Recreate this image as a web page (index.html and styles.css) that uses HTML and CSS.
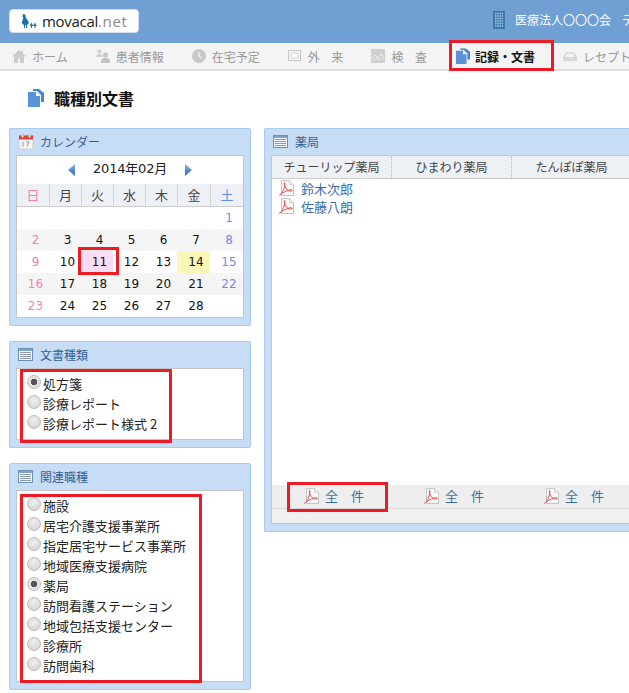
FILE: index.html
```html
<!DOCTYPE html>
<html lang="ja">
<head>
<meta charset="utf-8">
<title>職種別文書</title>
<link rel="stylesheet" href="styles.css">
</head>
<body>
<svg class="defs" width="0" height="0" aria-hidden="true">
  <defs>
    <linearGradient id="arrowFill" x1="0" y1="0" x2="0" y2="1">
      <stop offset="0" stop-color="#8db4e6"/>
      <stop offset="1" stop-color="#2f66b8"/>
    </linearGradient>
  </defs>
  <symbol id="pdf" viewBox="0 0 16 16">
    <path d="M2.500.5h8l4 4v11h-12z" fill="#fbfbfb" stroke="#c4c4c4"/>
    <path d="M10.500.5v4h4" fill="#eee" stroke="#d2d2d2"/>
    <path d="M.6 15.200C3 14 5.500 9 6 3.500c.3-1.500-.9-1.500-.9 0 .3 3 3 7 5.400 7.600 2 .3 3.200-.4 2.700-1-.6-.8-5-.4-12.600 4.900z" fill="none" stroke="#e2524b" stroke-width="1"/>
  </symbol>
  <symbol id="list" viewBox="0 0 15 13">
    <rect x=".5" y=".5" width="14" height="12" fill="#f4f7fb" stroke="#6d8fb5"/>
    <rect x="1" y="1" width="13" height="2" fill="#7fa3cc"/>
    <path d="M2 4.500h11M2 6.500h11M2 8.500h11M2 10.500h11" stroke="#8e9baa"/>
  </symbol>
  <symbol id="doc" viewBox="0 0 16 18">
    <path d="M5 0h6l5 4v9h-3V6L9 2H5z" fill="#4a86cf"/>
    <path d="M0 3h8l4 4v11H0z" fill="#5b92d8"/>
    <path d="M8 3v4h4z" fill="#fff"/>
  </symbol>
</svg>

<div class="page">
  <header class="top">
    <div class="logo">
      <svg class="duck" viewBox="0 0 16 14" width="16" height="14">
        <path d="M2.500 0C4 0 4.700 1 4.600 2.200 4.500 4 6.500 5.500 7.500 7.500c.8 2-.8 3.700-3 3.700-2.500 0-4-1.700-3.500-3.700C1.500 5.500 2.800 4.500 2.200 3H0.500L2 2.200C1.500 1.500 1.700.3 2.500 0z" fill="#1673ad"/>
        <path d="M3.500 11v3M5.500 11v3M10.500 11v3M14 11v3" stroke="#1673ad"/>
        <path d="M10.500 8.500l1.800 3.500H8.700zM14 8.500l1.800 3.500h-3.600z" fill="#1673ad"/>
      </svg>
      <span class="logo-main">movacal</span><span class="logo-sub">.net</span>
    </div>
    <div class="org">
      <svg class="building" viewBox="0 0 12 18" width="12" height="18">
        <rect width="12" height="18" fill="#3a78ac"/>
        <path d="M2 2.500h8M2 5h8M2 7.500h8M2 10h8M2 12.500h8M2 15h8" stroke="#a9c8e6" stroke-width="1.500" stroke-dasharray="1.500 .75"/>
      </svg>
      <span class="org-name">医療法人〇〇〇会</span>
      <span class="org-more">テ</span>
    </div>
  </header>

  <nav class="nav">
    <a class="nav-item"><svg class="nav-icon" viewBox="0 0 14 14"><path d="M7 1L0 7.500h2V14h4V9.500h2V14h4V7.500h2L11 4.500V1.500H9.500v1.600z" fill="#ccc"/></svg>ホーム</a>
    <a class="nav-item"><svg class="nav-icon" viewBox="0 0 14 14"><circle cx="3.500" cy="2.500" r="2.200" fill="#d2d2d2"/><path d="M0 8c0-2 1.500-3 3.500-3S7 6 7 8z" fill="#d2d2d2"/><circle cx="9.500" cy="6" r="2.500" fill="#c4c4c4"/><path d="M5 14v-2c0-2 2-3.200 4.500-3.200S14 10 14 12v2z" fill="#c4c4c4"/></svg>患者情報</a>
    <a class="nav-item"><svg class="nav-icon" viewBox="0 0 14 14"><circle cx="7" cy="7" r="7" fill="#c8c8c8"/><path d="M7 3v4.500l3 1.500" fill="none" stroke="#f4f4f4" stroke-width="1.200"/></svg>在宅予定</a>
    <a class="nav-item"><svg class="nav-icon" viewBox="0 0 14 14"><rect x=".5" y="1.500" width="12" height="10" fill="#f6f6f6" stroke="#c8c8c8"/><rect x="3" y="4" width="7" height="5" fill="#fff" stroke="#d0d0d0"/></svg><span class="wide">外 来</span></a>
    <a class="nav-item"><svg class="nav-icon" viewBox="0 0 14 14"><rect width="14" height="14" fill="#cfcfcf"/><path d="M1 9l3-3 3 3 3-4 3 3M1 12l4-3 3 2 5-3" fill="none" stroke="#eee"/></svg><span class="wide">検 査</span></a>
    <a class="nav-item is-active"><svg class="nav-icon" viewBox="0 0 16 18"><use href="#doc"/></svg>記録・文書</a>
    <a class="nav-item"><svg class="nav-icon" viewBox="0 0 14 14"><path d="M0 8l3-5h8l3 5v4H0z" fill="#d8d8d8"/><path d="M2 8l2-3.500h6L12 8z" fill="#f4f4f4"/></svg>レセプト</a>
  </nav>

  <h1 class="title"><svg class="title-icon" viewBox="0 0 16 18"><use href="#doc"/></svg>職種別文書</h1>

  <main class="columns">
    <div class="side">
      <section class="panel">
        <h2 class="panel-head">
          <svg class="cal-icon" viewBox="0 0 15 15"><rect y="2" width="14" height="13" fill="#f5f5f5" stroke="#aaa" stroke-width=".5"/><rect y="1.500" width="14" height="4" fill="#d9423a"/><rect x="2.500" width="2" height="3.500" fill="#eee" stroke="#888" stroke-width=".4"/><rect x="9.500" width="2" height="3.500" fill="#eee" stroke="#888" stroke-width=".4"/><path d="M4 8v4.500M7 8h3l-2 4.500" fill="none" stroke="#999"/></svg>
          カレンダー
        </h2>
        <div class="panel-body">
          <div class="month">
            <svg class="arrow" viewBox="0 0 7 12"><path d="M7 0v12L0 6z" fill="url(#arrowFill)"/></svg>
            <span class="month-label">2014年02月</span>
            <svg class="arrow" viewBox="0 0 7 12"><path d="M0 0v12l7-6z" fill="url(#arrowFill)"/></svg>
          </div>
          <div class="cal-head">
            <span class="sun">日</span><span>月</span><span>火</span><span>水</span><span>木</span><span>金</span><span class="sat">土</span>
          </div>
          <div class="cal-row"><span></span><span></span><span></span><span></span><span></span><span></span><span class="sat">1</span></div>
          <div class="cal-row is-alt"><span class="sun">2</span><span>3</span><span>4</span><span>5</span><span>6</span><span>7</span><span class="sat">8</span></div>
          <div class="cal-row"><span class="sun">9</span><span>10</span><span class="picked">11</span><span>12</span><span>13</span><span class="today">14</span><span class="sat">15</span></div>
          <div class="cal-row is-alt"><span class="sun">16</span><span>17</span><span>18</span><span>19</span><span>20</span><span>21</span><span class="sat">22</span></div>
          <div class="cal-row"><span class="sun">23</span><span>24</span><span>25</span><span>26</span><span>27</span><span>28</span><span></span></div>
        </div>
      </section>

      <section class="panel">
        <h2 class="panel-head"><svg class="list-icon"><use href="#list"/></svg>文書種類</h2>
        <div class="panel-body radios">
          <div class="radio is-on">処方箋</div>
          <div class="radio">診療レポート</div>
          <div class="radio">診療レポート様式 2</div>
        </div>
      </section>

      <section class="panel">
        <h2 class="panel-head"><svg class="list-icon"><use href="#list"/></svg>関連職種</h2>
        <div class="panel-body radios">
          <div class="radio">施設</div>
          <div class="radio">居宅介護支援事業所</div>
          <div class="radio">指定居宅サービス事業所</div>
          <div class="radio">地域医療支援病院</div>
          <div class="radio is-on">薬局</div>
          <div class="radio">訪問看護ステーション</div>
          <div class="radio">地域包括支援センター</div>
          <div class="radio">診療所</div>
          <div class="radio">訪問歯科</div>
        </div>
      </section>
    </div>

    <section class="panel panel-main">
      <h2 class="panel-head"><svg class="list-icon"><use href="#list"/></svg>薬局</h2>
      <div class="panel-body">
        <div class="tbl-head"><span>チューリップ薬局</span><span>ひまわり薬局</span><span>たんぽぽ薬局</span></div>
        <div class="tbl-body">
          <a class="file"><svg class="pdf-icon"><use href="#pdf"/></svg>鈴木次郎</a>
          <a class="file"><svg class="pdf-icon"><use href="#pdf"/></svg>佐藤八朗</a>
        </div>
        <div class="tbl-foot">
          <a><svg class="pdf-icon"><use href="#pdf"/></svg><span class="all">全　件</span></a>
          <a><svg class="pdf-icon"><use href="#pdf"/></svg><span class="all">全　件</span></a>
          <a><svg class="pdf-icon"><use href="#pdf"/></svg><span class="all">全　件</span></a>
        </div>
        <div class="tbl-end"></div>
      </div>
    </section>
  </main>

  <div class="mark mark-nav"></div>
  <div class="mark mark-day"></div>
  <div class="mark mark-doc"></div>
  <div class="mark mark-job"></div>
  <div class="mark mark-all"></div>
</div>
</body>
</html>
```

FILE: styles.css
```css
* { box-sizing: border-box; }
html, body { margin: 0; padding: 0; }
body {
  font-family: "DejaVu Sans", "Noto Sans CJK JP", sans-serif;
  font-size: 12px;
  color: #222;
  background: #fff;
}
.defs { position: absolute; }
.page { position: relative; width: 629px; height: 693px; overflow: hidden; }

.top {
  height: 43px;
  background: #6f9fd3;
  display: flex;
  justify-content: space-between;
  align-items: center;
  padding-left: 9px;
  white-space: nowrap;
}
.logo {
  width: 130px;
  height: 24px;
  margin-bottom: 1px;
  background: #fff;
  border: 1px solid #cfdff0;
  border-radius: 4px;
  display: flex;
  align-items: center;
  padding-left: 11px;
  font-family: "Open Sans", sans-serif;
  font-size: 15px;
}
.duck { margin-right: 5px; flex: none; }
.logo-main { color: #222; letter-spacing: -.3px; }
.logo-sub { color: #8a8a8a; letter-spacing: .7px; }
.org {
  width: 136px;
  flex: none;
  display: flex;
  align-items: center;
  margin-bottom: 4px;
  color: #fff;
  font-family: "Noto Sans CJK JP", sans-serif;
  font-size: 12px;
  overflow: hidden;
}
.building { margin-right: 10px; flex: none; }
.org-more { margin-left: 11px; }

.nav {
  height: 28px;
  background: #f4f4f4;
  border-bottom: 2px solid #ddd;
  display: flex;
  gap: 28px;
  padding-left: 12px;
  align-items: center;
  white-space: nowrap;
  font-family: "Noto Sans CJK JP", sans-serif;
  font-size: 12px;
  color: #999;
}
.nav-item { display: flex; align-items: center; flex: none; }
.nav-icon { width: 14px; height: 14px; margin-right: 6px; flex: none; }
.wide { word-spacing: 9px; letter-spacing: 0; }
.is-active { color: #111; font-weight: 700; margin-left: 1px; }
.is-active .nav-icon { margin-right: 5px; height: 16px; }

.title {
  margin: 0;
  height: 57px;
  padding: 0 0 4px 28px;
  display: flex;
  align-items: center;
  font-family: "Noto Sans CJK JP", sans-serif;
  font-size: 16px;
  font-weight: 700;
  color: #111;
}
.title-icon { width: 16px; height: 18px; margin-right: 10px; }

.columns {
  display: flex;
  align-items: flex-start;
  gap: 13px;
  padding-left: 9px;
}
.side { width: 242px; flex: none; display: flex; flex-direction: column; gap: 15px; }

.panel {
  background: #c7ddf5;
  border: 1px solid #a6ccf0;
  border-radius: 2px;
  padding: 0 6px 7px;
}
.panel-main { width: 380px; flex: none; border-right: 0; padding-right: 0; }
.panel-head {
  margin: 0;
  height: 26px;
  padding-bottom: 2px;
  display: flex;
  align-items: center;
  font-family: "Noto Sans CJK JP", sans-serif;
  font-size: 12px;
  font-weight: 400;
  color: #2f5f97;
}
.cal-icon { width: 15px; height: 15px; margin: 0 6px 0 3px; }
.list-icon { width: 15px; height: 13px; margin: 0 7px 0 2px; }

.panel-body {
  background: #fff;
  border: 1px solid #c6c6c6;
  font-family: "DejaVu Sans", "Noto Sans CJK JP", sans-serif;
}

.month {
  height: 28px;
  padding-bottom: 5px;
  display: flex;
  align-items: center;
  justify-content: center;
  gap: 18px;
  font-size: 13px;
  color: #222;
}
.month-label { letter-spacing: -.2px; }
.arrow { width: 7px; height: 12px; margin-top: 5px; }

.cal-head, .cal-row { display: grid; grid-template-columns: 32px 32px 32px 32px 32px 33px 33px; }
.cal-head {
  height: 23px;
  padding-bottom: 1px;
  background: #edf1f5;
  border-bottom: 1px solid #ccc;
  font-family: "Noto Sans CJK JP", sans-serif;
  color: #444;
  font-size: 13px;
}
.cal-head span { display: flex; align-items: center; justify-content: center; border-left: 1px dotted #bbb; }
.cal-head span:first-child { border-left: 0; }
.cal-row { height: 22px; font-size: 12px; color: #111; }
.cal-row span { display: flex; align-items: center; justify-content: center; padding-left: 5px; }
.is-alt { background: #f5f5f5; }
.cal-head .sun, .cal-row .sun { color: #f77fb0; }
.cal-head .sat, .cal-row .sat { color: #6a8cf0; }
.picked { background: #fadcf6; }
.today { background: #fbf7b8; }

.radios { padding: 4px 0 6px 10px; font-family: "Noto Sans CJK JP", sans-serif; color: #222; }
.radio { height: 20px; display: flex; align-items: center; gap: 2px; font-size: 13px; white-space: nowrap; }
.radio::before {
  content: "";
  width: 12px;
  height: 12px;
  margin-top: -2px;
  border-radius: 50%;
  border: 1px solid #bdbdbd;
  background: radial-gradient(circle at 50% 35%, #f0f0f0, #cfcfcf);
  flex: none;
}
.radio.is-on::before { background: radial-gradient(circle, #555 0 3px, #e3e3e3 3.500px); }

.panel-main .panel-body { height: 369px; display: flex; flex-direction: column; overflow: hidden; }
.tbl-head {
  height: 23px;
  flex: none;
  display: flex;
  background: #edf1f5;
  border-bottom: 1px solid #ccc;
  font-family: "Noto Sans CJK JP", sans-serif;
  color: #444;
}
.tbl-head span { width: 120px; flex: none; text-align: center; line-height: 22px; border-left: 1px dotted #bbb; }
.tbl-head span:first-child { width: 119px; border-left: 0; }
.tbl-body { flex: 1; padding: 0 0 0 7px; font-family: "Noto Sans CJK JP", sans-serif; font-size: 13px; }
.file { display: flex; align-items: center; height: 18px; color: #3c6ea5; }
.pdf-icon { width: 16px; height: 16px; margin-right: 6px; flex: none; }
.tbl-foot {
  height: 24px;
  padding-bottom: 2px;
  flex: none;
  background: #eee;
  border-bottom: 1px solid #d8d8d8;
  display: flex;
  font-family: "Noto Sans CJK JP", sans-serif;
  font-size: 13px;
  color: #3c6ea5;
}
.tbl-foot a { width: 120px; flex: none; display: flex; align-items: center; padding-left: 32px; }
.tbl-foot .pdf-icon { margin-right: 5px; }
.tbl-end { height: 14px; flex: none; background: #f0f0f0; }

.mark { position: absolute; border: 3px solid #ed1c24; }
.mark-nav { left: 449px; top: 40px; width: 105px; height: 31px; }
.mark-day { left: 78px; top: 247px; width: 41px; height: 28px; }
.mark-doc { left: 20px; top: 369px; width: 152px; height: 74px; }
.mark-job { left: 20px; top: 494px; width: 182px; height: 189px; }
.mark-all { left: 287px; top: 482px; width: 101px; height: 30px; }
```
